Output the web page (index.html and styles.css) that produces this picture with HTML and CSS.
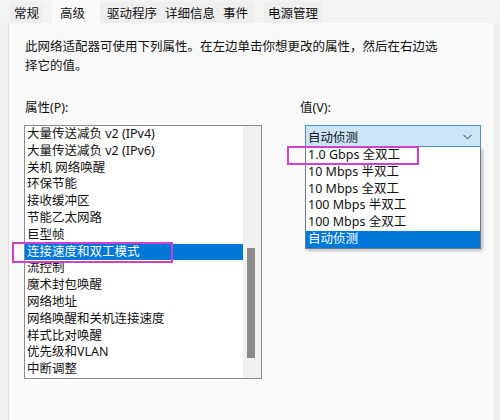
FILE: index.html
```html
<!DOCTYPE html>
<html lang="zh-CN">
<head>
    <meta charset="UTF-8">
    <title>高级属性</title>
    <link rel="stylesheet" href="styles.css">
</head>
<body>
    <div class="tabs">
        <div class="tab">常规</div>
        <div class="tab active">高级</div>
        <div class="tab after-active">驱动程序</div>
        <div class="tab">详细信息</div>
        <div class="tab events">事件</div>
        <div class="tab power">电源管理</div>
    </div>

    <div class="panel">
        <p class="intro">此网络适配器可使用下列属性。在左边单击你想更改的属性，然后在右边选择它的值。</p>

        <div class="columns">
            <div class="col-left">
                <div class="label">属性(P):</div>
                <div class="listbox">
                    <ul class="items">
                        <li>大量传送减负 v2 (IPv4)</li>
                        <li>大量传送减负 v2 (IPv6)</li>
                        <li>关机 网络唤醒</li>
                        <li>环保节能</li>
                        <li>接收缓冲区</li>
                        <li>节能乙太网路</li>
                        <li>巨型帧</li>
                        <li class="selected">连接速度和双工模式</li>
                        <li>流控制</li>
                        <li>魔术封包唤醒</li>
                        <li>网络地址</li>
                        <li>网络唤醒和关机连接速度</li>
                        <li>样式比对唤醒</li>
                        <li>优先级和VLAN</li>
                        <li>中断调整</li>
                    </ul>
                    <div class="scrollbar"><div class="thumb"></div></div>
                </div>
            </div>

            <div class="col-right">
                <div class="label">值(V):</div>
                <div class="combo">
                    <span>自动侦测</span>
                    <svg class="chevron" width="9" height="6" viewBox="0 0 9 6">
                        <path d="M0.5 0.8 L4.5 4.8 L8.5 0.8" fill="none" stroke="#6b6b6b" stroke-width="1.1"/>
                    </svg>
                </div>
                <ul class="dropdown">
                    <li>1.0 Gbps 全双工</li>
                    <li>10 Mbps 半双工</li>
                    <li>10 Mbps 全双工</li>
                    <li>100 Mbps 半双工</li>
                    <li>100 Mbps 全双工</li>
                    <li class="selected">自动侦测</li>
                </ul>
            </div>
        </div>
    </div>

    <!-- annotation boxes drawn over the dialog -->
    <div class="mark mark-property"></div>
    <div class="mark mark-value"></div>
</body>
</html>
```

FILE: styles.css
```css
* {
    box-sizing: border-box;
}
body {
    margin: 0;
    width: 500px;
    height: 420px;
    overflow: hidden;
    position: relative;
    background-color: #f0f0f0;
    font-family: "Noto Sans", "Noto Sans CJK SC", sans-serif;
    font-size: 12.5px;
    color: #111;
}
ul {
    list-style: none;
    margin: 0;
    padding: 0;
}

/* tab strip */
.tabs {
    display: flex;
    height: 23px;
    padding-left: 10px;
    background-color: #f3f3f3;
}
.tab {
    margin-top: 2px;
    padding: 2px 4px 0 4px;
    line-height: 19px;
    background-color: #eeeeee;
    white-space: nowrap;
}
.tab.active {
    margin-top: 0;
    margin-left: 9px;
    padding: 4px 15px 0 8px;
    background-color: #f9f9f9;
}
.tab.after-active {
    padding-left: 7px;
}
.tab.events {
    padding-right: 6px;
}
.tab.power {
    margin-left: 10px;
}

/* page */
.panel {
    height: 397px;
    margin: 0 5px 0 8px;
    padding: 14px 0 0 16px;
    background-color: #f9f9f9;
    border-left: 1px solid #dedede;
    border-right: 1px solid #e9e9e9;
}
.intro {
    width: 420px;
    margin: 0 0 23px 0;
    line-height: 19px;
}
.columns {
    display: flex;
    gap: 38px;
}
.label {
    height: 19px;
    line-height: 19px;
    margin-bottom: 8px;
}
.col-left {
    width: 238px;
    margin-left: -1px;
}
.col-left .label {
    padding-left: 1px;
}

/* property list */
.listbox {
    display: flex;
    border: 1px solid #8a8d93;
    background-color: #fff;
}
.items {
    flex: 1;
}
.items li {
    height: 16.8px;
    line-height: 16.8px;
    padding-left: 2px;
    white-space: nowrap;
}
.items li.selected,
.dropdown li.selected {
    background-color: #0078d7;
    color: #fff;
}
.scrollbar {
    width: 18px;
    padding-top: 122px;
    background-color: #f0f0f0;
}
.thumb {
    width: 8px;
    height: 110px;
    margin-left: 4px;
    background-color: #8b8b8b;
}

/* value combo */
.col-right {
    width: 181px;
}
.combo {
    display: flex;
    align-items: center;
    justify-content: space-between;
    width: 176px;
    height: 22px;
    margin-left: 5px;
    padding: 0 8px 0 2px;
    background-color: #cce4f7;
    border: 1px solid #4f8fd1;
}
.chevron {
    margin-top: 1px;
}
.dropdown {
    width: 176px;
    margin-left: 5px;
    background-color: #fff;
    border: 1px solid #6c7d92;
    border-top: none;
    box-shadow: 2px 2px 3px rgba(0, 0, 0, 0.22);
}
.dropdown li {
    height: 16.8px;
    line-height: 16.8px;
    padding-left: 2px;
    white-space: nowrap;
}

/* annotations */
.mark {
    position: absolute;
    border: 2px solid #d03fd0;
}
.mark-property {
    left: 12px;
    top: 242px;
    width: 161px;
    height: 21px;
}
.mark-value {
    left: 287px;
    top: 146px;
    width: 132px;
    height: 19px;
}
```
